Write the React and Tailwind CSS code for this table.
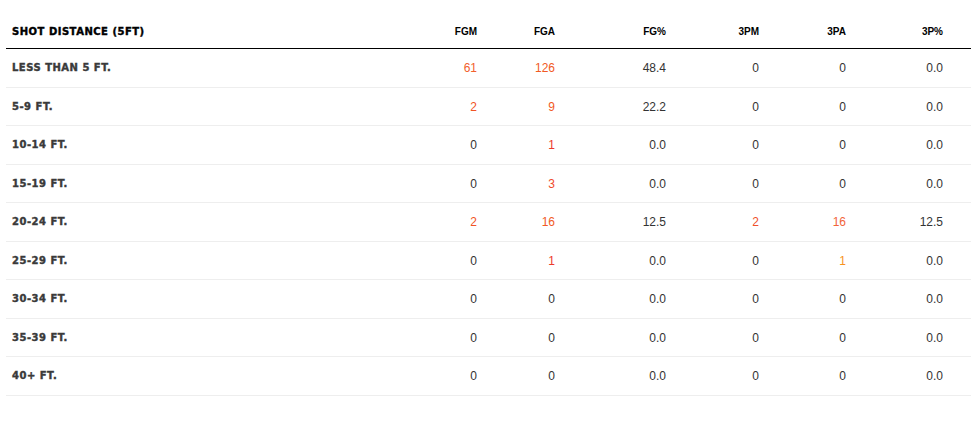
import React from "react";

const cols = ["FGM", "FGA", "FG%", "3PM", "3PA", "3P%"];

// each cell: [value, colour class]
const dark = "text-[#333333]";
const rows = [
  { label: "Less than 5 ft.", cells: [["61", "text-[#f2602c]"], ["126", "text-[#f15a24]"], ["48.4", dark], ["0", dark], ["0", dark], ["0.0", dark]] },
  { label: "5-9 ft.", cells: [["2", "text-[#f15424]"], ["9", "text-[#f25a24]"], ["22.2", dark], ["0", dark], ["0", dark], ["0.0", dark]] },
  { label: "10-14 ft.", cells: [["0", dark], ["1", "text-[#ec3a2c]"], ["0.0", dark], ["0", dark], ["0", dark], ["0.0", dark]] },
  { label: "15-19 ft.", cells: [["0", dark], ["3", "text-[#ef4a2b]"], ["0.0", dark], ["0", dark], ["0", dark], ["0.0", dark]] },
  { label: "20-24 ft.", cells: [["2", "text-[#f15424]"], ["16", "text-[#f15a24]"], ["12.5", dark], ["2", "text-[#f0502a]"], ["16", "text-[#f2643a]"], ["12.5", dark]] },
  { label: "25-29 ft.", cells: [["0", dark], ["1", "text-[#ec3a2c]"], ["0.0", dark], ["0", dark], ["1", "text-[#f7921e]"], ["0.0", dark]] },
  { label: "30-34 ft.", cells: [["0", dark], ["0", dark], ["0.0", dark], ["0", dark], ["0", dark], ["0.0", dark]] },
  { label: "35-39 ft.", cells: [["0", dark], ["0", dark], ["0.0", dark], ["0", dark], ["0", dark], ["0.0", dark]] },
  { label: "40+ ft.", cells: [["0", dark], ["0", dark], ["0.0", dark], ["0", dark], ["0", dark], ["0.0", dark]] },
];

const grid = "grid grid-cols-[400px_71px_78px_111px_93px_87px_97px_28px]";
const labelFont =
  "pl-[6px] text-[10px] leading-[12px] font-bold uppercase tracking-[0.05em] font-['DejaVu_Sans',sans-serif] [-webkit-text-stroke:0.4px]";

const App = () => {
  return (
    <div className="w-[971px] h-[432px] bg-white overflow-hidden">
      <div className="ml-[6px] w-[965px]">
        {/* header */}
        <div className={`${grid} h-[49px] items-end pb-[10px] border-b border-black`}>
          <div className={`${labelFont} text-black`}>Shot Distance (5ft)</div>
          {cols.map((c) => (
            <div
              key={c}
              className="text-right text-[10px] leading-[12px] font-bold text-black font-['Liberation_Sans',Arial,sans-serif]"
            >
              {c}
            </div>
          ))}
          <div />
        </div>

        {rows.map((r) => (
          <div
            key={r.label}
            className={`${grid} h-[38.5px] pt-[1px] items-center border-b border-[#eeeeee]`}
          >
            <div className={`${labelFont} text-[#3a3a3a]`}>{r.label}</div>
            {r.cells.map(([v, cls], i) => (
              <div
                key={i}
                className={`text-right text-[12px] leading-[14px] font-['Liberation_Sans',Arial,sans-serif] ${cls}`}
              >
                {v}
              </div>
            ))}
            <div />
          </div>
        ))}
      </div>
    </div>
  );
};

export default App;
